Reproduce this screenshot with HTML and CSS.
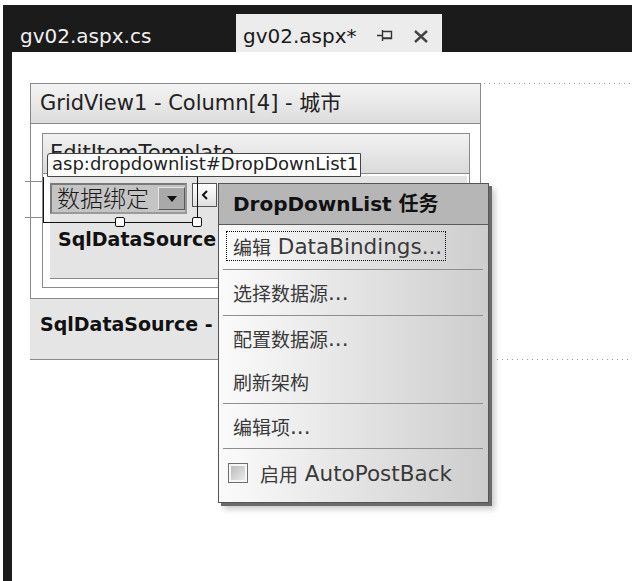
FILE: index.html
```html
<!DOCTYPE html>
<html lang="zh-CN">
<head>
<meta charset="utf-8">
<title>gv02.aspx</title>
<link rel="stylesheet" href="styles.css">
</head>
<body>
<div class="frame">
  <div class="tabs">
    <div class="tab tab-inactive">gv02.aspx.cs</div>
    <div class="tab tab-active">
      <span class="tab-label">gv02.aspx*</span>
      <svg class="pin" width="16" height="11" viewBox="0 0 16 11"><path d="M0 5.5H5M5.5 0V11M5.5 1.5H14.5V8.5H5.5M5.5 8H14.5" fill="none" stroke="#333" stroke-width="1.4"/></svg>
      <svg class="close" width="18" height="13" viewBox="0 0 18 13"><path d="M3 1L15 12M15 1L3 12" stroke="#444" stroke-width="2.4" fill="none"/></svg>
    </div>
  </div>
  <div class="doc">
    <div class="gv-line">
      <div class="gv">
        <div class="gv-head">GridView1 - Column[4] - 城市</div>
        <div class="gv-body">
          <div class="tpl">
            <div class="tpl-head">EditItemTemplate</div>
            <div class="tpl-body">
              <div class="tpl-content">
                <div class="ddl-row">
                  <div class="ddl"><span class="ddl-text">数据绑定</span><span class="ddl-btn"><svg width="10" height="6" viewBox="0 0 10 6"><path d="M0 0H10L5 6Z" fill="#111"/></svg></span></div>
                  <div class="smart"><svg width="8" height="10" viewBox="0 0 8 10"><path d="M6 1L2 5L6 9" fill="none" stroke="#111" stroke-width="2"/></svg></div>
                </div>
                <div class="sds-inner">SqlDataSource - SqlDataSource1</div>
              </div>
            </div>
          </div>
        </div>
      </div>
      <div class="dots dots-top"></div>
    </div>
    <div class="sds-line">
      <div class="sds-row"><span class="sds-text">SqlDataSource - SqlDataSource1</span></div>
      <div class="dots dots-bottom"></div>
    </div>

    <div class="guide guide-a"></div>
    <div class="guide guide-b"></div>
    <div class="tooltip">asp:dropdownlist#DropDownList1</div>
    <div class="selection"></div>
    <div class="handle handle-mid"></div>
    <div class="handle handle-end"></div>

    <div class="menu">
      <div class="menu-head">DropDownList 任务</div>
      <div class="menu-body">
        <div class="mi mi-1"><span class="focus"><span class="zh">编辑</span> DataBindings...</span></div>
        <div class="sep"></div>
        <div class="mi mi-2"><span class="zh">选择数据源</span>...</div>
        <div class="sep"></div>
        <div class="mi mi-3"><span class="zh">配置数据源</span>...</div>
        <div class="mi mi-4"><span class="zh">刷新架构</span></div>
        <div class="sep"></div>
        <div class="mi mi-5"><span class="zh">编辑项</span>...</div>
        <div class="sep"></div>
        <div class="mi mi-6"><span class="cb"></span><span class="zh">启用</span>&nbsp;AutoPostBack</div>
      </div>
    </div>
  </div>
</div>
</body>
</html>
```
FILE: styles.css
```css
* { box-sizing: border-box; }
html, body { margin: 0; padding: 0; background: #fff; }
body {
  width: 632px;
  height: 581px;
  overflow: hidden;
  font-family: "DejaVu Sans", "Noto Sans CJK SC", sans-serif;
  color: #1a1a1a;
}

.frame {
  margin: 5px 0 0 3px;
  width: 629px;
  height: 576px;
  background: #1b1b1b;
  display: flex;
  flex-direction: column;
}

/* ---------- tabs ---------- */
.tabs {
  flex: none;
  height: 47px;
  display: flex;
  align-items: flex-end;
}
.tab {
  height: 38px;
  font-size: 20px;
  white-space: nowrap;
}
.tab-inactive {
  width: 233px;
  padding: 6px 0 0 17px;
  line-height: 32px;
  color: #f0f0f0;
}
.tab-active {
  width: 206px;
  padding: 6px 0 0 7px;
  background: #ececec;
  color: #1a1a1a;
  display: flex;
  align-items: flex-start;
}
.tab-label { line-height: 32px; }
.pin { margin: 10px 0 0 20px; }
.close { margin: 10px 0 0 19px; }

/* ---------- document surface ---------- */
.doc {
  flex: 1;
  margin-left: 9px;
  background: #fff;
  position: relative;
  padding: 31px 0 0 18px;
}

.gv-line, .sds-line {
  display: flex;
}
.dots {
  flex: 1;
  height: 1px;
  margin-left: 3px;
  background: repeating-linear-gradient(to right, #9a9a9a 0 1px, transparent 1px 5px);
}
.dots-top { align-self: flex-start; }
.dots-bottom { align-self: flex-end; margin-left: 16px; }

.gv {
  width: 451px;
  border: 1px solid #8a8a8a;
}
.gv-head {
  height: 40px;
  border-bottom: 1px solid #8a8a8a;
  background: linear-gradient(#f4f4f4, #dcdcdc);
  padding-left: 9px;
  font-size: 21px;
  line-height: 39px;
  color: #222;
}
.gv-body {
  padding: 9px 10px 10px 11px;
}
.tpl {
  border: 1px solid #8a8a8a;
}
.tpl-head {
  height: 40px;
  border-bottom: 1px solid #8a8a8a;
  background: linear-gradient(#f2f2f2, #dadada);
  padding-left: 7px;
  font-size: 21px;
  line-height: 39px;
  color: #222;
}
.tpl-body {
  padding: 2px 2px 8px 7px;
}
.tpl-content {
  height: 103px;
  background: #e4e4e4;
  border-bottom: 1px solid #8a8a8a;
  padding-top: 7px;
  overflow: hidden;
}
.ddl-row {
  display: flex;
  align-items: flex-start;
}
.ddl {
  width: 137px;
  height: 31px;
  background: #c4c4c4;
  border: 2px solid #7a7a7a;
  border-right-color: #9a9a9a;
  border-bottom-color: #9a9a9a;
  display: flex;
  align-items: center;
  padding-left: 5px;
}
.ddl-text {
  font-size: 23px;
  line-height: 26px;
  color: #1a1a1a;
  width: 101px;
  font-weight: 300;
  white-space: nowrap;
}
.ddl-btn {
  width: 27px;
  height: 23px;
  background: #a9a9a9;
  border: 1px solid #e6e6e6;
  border-right-color: #5a5a5a;
  border-bottom-color: #5a5a5a;
  display: flex;
  align-items: center;
  justify-content: center;
}
.smart {
  width: 25px;
  height: 24px;
  margin-left: 5px;
  border: 1px solid #555;
  background: linear-gradient(#ffffff, #e0e0e0);
  display: flex;
  align-items: center;
  justify-content: center;
}
.sds-inner {
  width: 168px;
  overflow: hidden;
  margin-top: 13px;
  padding-left: 8px;
  font-size: 19px;
  font-weight: bold;
  line-height: 24px;
  white-space: nowrap;
  color: #111;
}

.sds-row {
  width: 451px;
  height: 61px;
  background: #e5e5e5;
  border-bottom: 1px solid #8a8a8a;
  padding: 13px 0 0 10px;
  font-size: 19px;
  font-weight: bold;
  line-height: 24px;
  white-space: nowrap;
  color: #111;
}
.sds-text {
  display: block;
  width: 176px;
  overflow: hidden;
}

/* ---------- designer overlays ---------- */
.guide {
  position: absolute;
  left: 13px;
  width: 19px;
  height: 1px;
  background: #8c8c8c;
}
.guide-a { top: 129px; }
.guide-b { top: 165px; }

.tooltip {
  position: absolute;
  left: 35px;
  top: 101px;
  width: 314px;
  height: 24px;
  background: #fff;
  border: 1px solid #444;
  border-radius: 3px 0 0 0;
  padding-left: 4px;
  font-size: 18px;
  line-height: 20px;
  color: #222;
  white-space: nowrap;
}
.selection {
  position: absolute;
  left: 31px;
  top: 125px;
  width: 155px;
  height: 46px;
  border: 1px solid #111;
  border-top: none;
}
.handle {
  position: absolute;
  top: 165px;
  width: 10px;
  height: 10px;
  background: #fff;
  border: 1px solid #111;
  border-radius: 2px;
}
.handle-mid { left: 103px; }
.handle-end { left: 180px; }

/* ---------- smart tag menu ---------- */
.menu {
  position: absolute;
  left: 206px;
  top: 131px;
  width: 271px;
  border: 1px solid #555;
  background: linear-gradient(to right, #fbfbfb, #cdcdcd);
  box-shadow: 3px 3px 0 #6a6a6a, 6px 6px 6px rgba(0, 0, 0, 0.22);
  padding-bottom: 5px;
}
.menu-head {
  height: 41px;
  background: #b6b6b6;
  border-bottom: 1px solid #5a5a5a;
  padding-left: 14px;
  font-size: 20px;
  font-weight: bold;
  line-height: 40px;
  color: #111;
  white-space: nowrap;
}
.mi {
  display: flex;
  align-items: center;
  padding-left: 14px;
  font-size: 21.5px;
  color: #3a3a3a;
  white-space: nowrap;
}
.zh { font-size: 19px; }
.mi-1 { height: 44px; padding-left: 7px; align-items: flex-start; }
.mi-2 { height: 45px; }
.mi-3 { height: 44px; }
.mi-4 { height: 43px; }
.mi-5 { height: 44px; }
.mi-6 { height: 48px; padding-left: 9px; }
.focus {
  display: flex;
  align-items: center;
  white-space: pre;
  margin-top: 6px;
  height: 30px;
  width: 220px;
  border: 1px dotted #111;
  padding-left: 6px;
}
.sep {
  height: 1px;
  margin: 0 5px 0 4px;
  background: #8e8e8e;
}
.cb {
  flex: none;
  width: 20px;
  height: 20px;
  margin-right: 12px;
  border: 1px solid #6e6e6e;
  box-shadow: inset 0 0 0 2px #f6f6f6;
  background: linear-gradient(135deg, #b4b4b4, #f0f0f0);
}
```
